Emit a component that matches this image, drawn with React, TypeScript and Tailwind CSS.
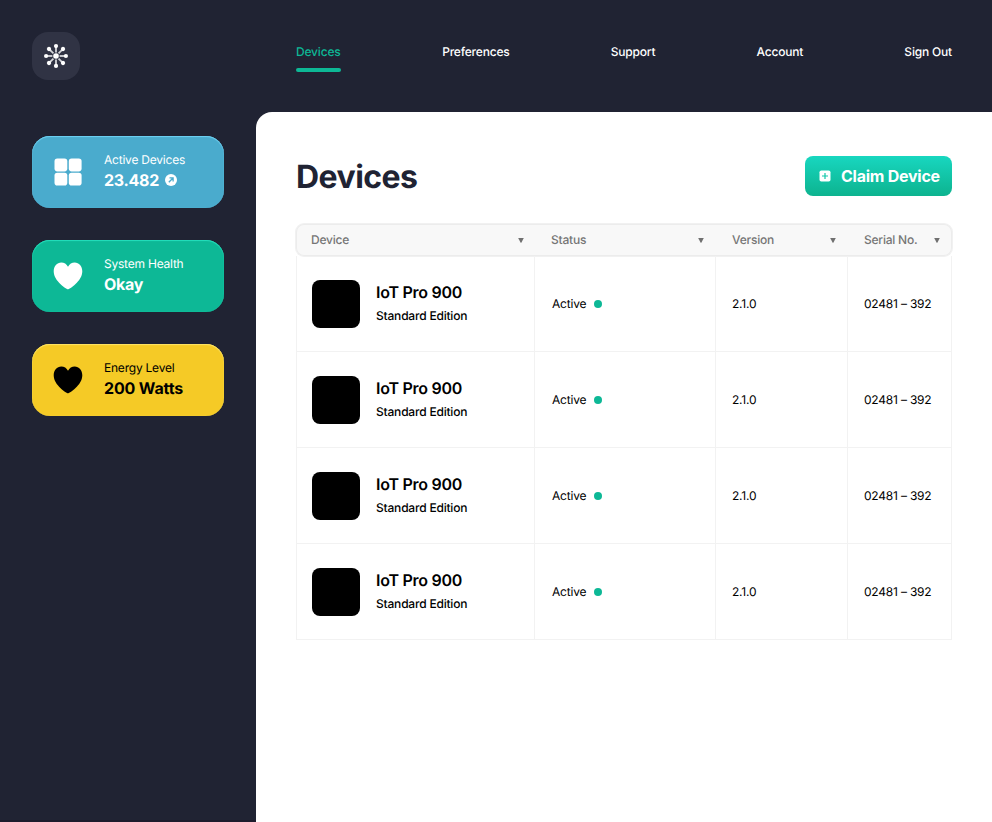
import type { ReactNode } from "react";

const navItems = ["Devices", "Preferences", "Support", "Account", "Sign Out"];
const rows = [1, 2, 3, 4];

function Logo() {
  return (
    <div className="flex h-12 w-12 items-center justify-center rounded-2xl bg-[#303344]">
      <svg width="24" height="24" viewBox="0 0 24 24" fill="#fff">
        <circle cx="12" cy="12" r="2.8" />
        {[0, 45, 90, 135, 180, 225, 270, 315].map((angle) => (
          <g key={angle} transform={`rotate(${angle} 12 12)`}>
            <path d="M12 3v5.4" stroke="#fff" strokeOpacity="0.8" strokeWidth="1.8" />
            <circle cx="12" cy="2.1" r="2.1" />
          </g>
        ))}
      </svg>
    </div>
  );
}

function GridIcon() {
  return (
    <svg width="32" height="32" viewBox="0 0 32 32" fill="#fff">
      <rect x="2.5" y="2.6" width="12.8" height="12.8" rx="2.8" />
      <rect x="16.8" y="2.6" width="12.8" height="12.8" rx="2.8" />
      <rect x="2.5" y="16.8" width="12.8" height="12.8" rx="2.8" />
      <rect x="16.8" y="16.8" width="12.8" height="12.8" rx="2.8" />
    </svg>
  );
}

function HeartIcon() {
  return (
    <svg width="32" height="32" viewBox="0 0 32 32" fill="currentColor">
      <path d="M16 29.3C14.8 29.3 1.7 21.2 1.7 11.2C1.7 6.3 5 2.5 9.3 2.5C12.2 2.5 14.6 4.1 16 6.7C17.4 4.1 19.8 2.5 22.7 2.5C27 2.5 30.3 6.3 30.3 11.2C30.3 21.2 17.2 29.3 16 29.3Z" />
    </svg>
  );
}

function ArrowBadge() {
  return (
    <svg width="12" height="12" viewBox="0 0 12 12">
      <circle cx="6" cy="6" r="6" fill="#fff" />
      <path d="M3.8 8.2L7.8 4.2M4.5 3.9H8.1V7.5" stroke="#4aabcd" strokeWidth="1.3" fill="none" />
    </svg>
  );
}

type StatProps = {
  label: string;
  value: string;
  icon: ReactNode;
  badge?: ReactNode;
  className: string;
  valueClassName: string;
};

function StatCard({ label, value, icon, badge, className, valueClassName }: StatProps) {
  return (
    <div className={`flex h-[72px] w-48 items-center rounded-[18px] pl-5 ${className}`}>
      {icon}
      <div className="ml-5">
        <div className="text-[12px] leading-4 tracking-[-0.22px]">{label}</div>
        <div className={`flex h-6 items-center gap-1.5 text-[16px] font-bold leading-6 ${valueClassName}`}>
          {value}
          {badge}
        </div>
      </div>
    </div>
  );
}

function HeaderCell({ label, className }: { label: string; className: string }) {
  return (
    <div className={`flex items-center justify-between ${className}`}>
      <span>{label}</span>
      <svg width="6" height="5" viewBox="0 0 6 5" fill="#707070">
        <path d="M0.2 0h5.6L3.6 4.2a.7.7 0 0 1-1.2 0Z" />
      </svg>
    </div>
  );
}

export default function App() {
  return (
    <div className="flex h-[822px] w-[992px] flex-col overflow-hidden bg-[#202333] font-['Inter',sans-serif] [text-rendering:geometricPrecision]">
      <header className="flex h-28 shrink-0 pl-8 pr-10 pt-8">
        <Logo />
        <nav className="ml-[216px] flex flex-1 justify-between text-[12px] font-medium leading-4 tracking-[-0.19px] text-white">
          {navItems.map((item, i) => (
            <a key={item} className={i === 0 ? "w-[45px] pt-3 text-[#0db896]" : "pt-3"}>
              {item}
              {i === 0 && <div className="mt-2 h-1 rounded-full bg-[#0db896]" />}
            </a>
          ))}
        </nav>
      </header>
      <div className="flex flex-1">
        <aside className="flex w-64 shrink-0 flex-col gap-8 border-b-2 border-[#1d1b2c] pl-8 pt-6">
          <StatCard
            label="Active Devices"
            value="23.482"
            icon={<GridIcon />}
            badge={<ArrowBadge />}
            className="bg-[#4aabcd] text-white shadow-[inset_0_1px_1px_#70d2f3,inset_0_0_1px_#62c6e8]"
            valueClassName="tracking-[-0.3px]"
          />
          <StatCard
            label="System Health"
            value="Okay"
            icon={<HeartIcon />}
            className="bg-[#0db896] text-white shadow-[inset_0_1px_1px_#25dfbd,inset_0_0_1px_#20d3b0]"
            valueClassName="tracking-[-0.3px]"
          />
          <StatCard
            label="Energy Level"
            value="200 Watts"
            icon={<HeartIcon />}
            className="bg-[#f5ca26] text-black shadow-[inset_0_1px_1px_#ffe567,inset_0_0_1px_#ffe04f]"
            valueClassName="tracking-[-0.15px]"
          />
        </aside>
        <main className="flex-1 rounded-tl-2xl bg-white pl-10 pr-10 pt-11">
          <div className="flex h-10 items-center justify-between">
            <h1 className="pt-0.5 text-[32px] font-bold leading-10 tracking-[-0.55px] text-[#202333]">Devices</h1>
            <button className="flex h-10 w-[147px] items-center rounded-lg bg-linear-to-b from-[#18d7c0] to-[#0db38f] pl-[14px] text-[16px] font-bold tracking-[-0.25px] text-white">
              <svg width="12" height="12" viewBox="0 0 12 12">
                <rect x="0.5" y="0.5" width="11" height="11" rx="1.8" fill="#fff" />
                <path d="M6 3v6M3 6h6" stroke="#11c7aa" strokeWidth="1.2" />
              </svg>
              <span className="ml-2.5 whitespace-nowrap">Claim Device</span>
            </button>
          </div>
          <div className="mt-7 flex h-8 rounded-lg bg-[#f8f8f8] text-[12px] font-medium tracking-[-0.22px] text-[#757575] shadow-[inset_0_0_0_1px_#ececec,0_0_0_1px_#f1f1f1]">
            <HeaderCell label="Device" className="w-[239px] pl-[15px] pr-[11.5px]" />
            <HeaderCell label="Status" className="w-[181px] pl-4 pr-[12.5px]" />
            <HeaderCell label="Version" className="w-[132px] pl-4 pr-[12.5px]" />
            <HeaderCell label="Serial No." className="w-[104px] pl-4 pr-[12.5px]" />
          </div>
          <div className="border-l border-[#f2f2f2] text-[12px] tracking-[-0.2px] text-black">
            {rows.map((row) => (
              <div key={row} className="flex h-24 border-b border-[#f2f2f2]">
                <div className="flex w-[238px] items-center border-r border-[#f2f2f2] pl-[15px]">
                  <div className="h-12 w-12 rounded-lg bg-black" />
                  <div className="mb-1 ml-4">
                    <div className="text-[16px] font-semibold leading-6 tracking-[-0.27px]">IoT Pro 900</div>
                    <div className="mt-1 font-medium leading-4">Standard Edition</div>
                  </div>
                </div>
                <div className="flex w-[181px] items-center border-r border-[#f2f2f2] pl-[17px]">
                  <span className="w-[42px]">Active</span>
                  <span className="h-2 w-2 rounded-full bg-[#0db896]" />
                </div>
                <div className="flex w-[132px] items-center border-r border-[#f2f2f2] pl-4">2.1.0</div>
                <div className="flex w-[104px] items-center border-r border-[#f2f2f2] pl-4">02481 – 392</div>
              </div>
            ))}
          </div>
        </main>
      </div>
    </div>
  );
}
